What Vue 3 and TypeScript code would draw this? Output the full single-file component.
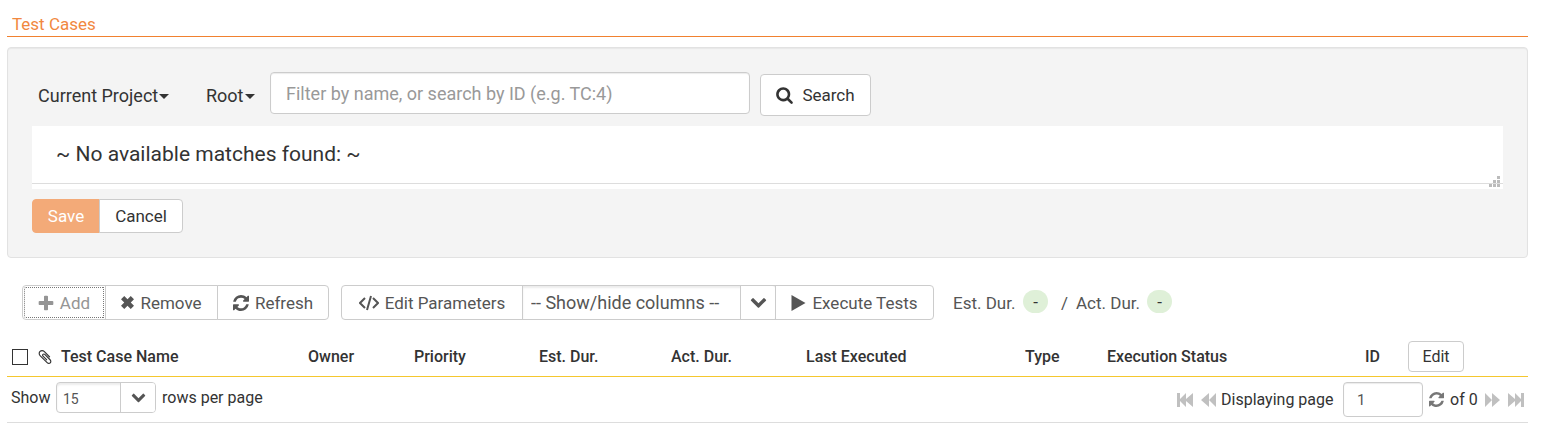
<script setup lang="ts">
import { ref } from 'vue'

const filter = ref('')
const page = ref('1')
const rows = ref('15')
const allChecked = ref(false)
const columns = ['Owner', 'Priority', 'Est. Dur.', 'Act. Dur.', 'Last Executed', 'Type', 'Execution Status', 'ID']

const chevronPath =
  'M1683 808l-742 741q-19 19-45 19t-45-19L109 808q-19-19-19-45.5t19-45.5l166-165q19-19 45-19t45 19l531 531 531-531q19-19 45-19t45 19l166 165q19 19 19 45.5t-19 45.5z'
const refreshPath =
  'M1511 1056q0 5-1 7-64 268-268 434.5T764 1664q-146 0-282.5-55T238 1452l-129 129q-19 19-45 19t-45-19-19-45v-448q0-26 19-45t45-19h448q26 0 45 19t19 45-19 45l-137 137q71 66 161 102t187 36q134 0 250-65t186-179q11-17 53-117 8-23 30-23h192q13 0 22.5 9.5t9.5 22.5zm25-800v448q0 26-19 45t-45 19h-448q-26 0-45-19t-19-45 19-45l138-138Q969 384 768 384q-134 0-250 65T332 628q-11 17-53 117-8 23-30 23H50q-13 0-22.5-9.5T18 736v-7q65-268 270-434.5T768 128q146 0 284 55.5T1297 340l130-129q19-19 45-19t45 19 19 45z'
</script>

<template>
  <main class="page">
    <h1 class="title">Test Cases</h1>

    <section class="panel">
      <form class="filters" @submit.prevent>
        <button type="button" class="picker project">Current Project<span class="caret"></span></button>
        <button type="button" class="picker root">Root<span class="caret"></span></button>
        <input v-model="filter" class="field search-field" type="text" aria-label="Filter test cases" placeholder="Filter by name, or search by ID (e.g. TC:4)" />
        <button type="submit" class="btn search">
          <svg class="icon-search" viewBox="0 0 1664 1792" aria-hidden="true"><path d="M1152 832q0-185-131.5-316.5T704 384 387.5 515.5 256 832t131.5 316.5T704 1280t316.5-131.5T1152 832zm512 832q0 52-38 90t-90 38q-54 0-90-38l-343-342q-179 124-399 124-143 0-273.5-55.5t-225-150-150-225T0 832t55.5-273.5 150-225 225-150T704 128t273.5 55.5 225 150 150 225T1408 832q0 220-124 399l343 343q37 37 37 90z" /></svg>
          Search
        </button>
      </form>

      <div class="results">
        <p class="message">~ No available matches found: ~</p>
        <svg class="grip" viewBox="0 0 11 11" aria-hidden="true"><path d="M8 0h3v3H8zM4 4h3v3H4zM8 4h3v3H8zM0 8h3v3H0zM4 8h3v3H4zM8 8h3v3H8z" /></svg>
      </div>

      <div class="group actions">
        <button type="button" class="btn save">Save</button>
        <button type="button" class="btn cancel">Cancel</button>
      </div>
    </section>

    <div class="toolbar">
      <div class="group">
        <button type="button" class="btn add">
          <svg class="icon" viewBox="0 128 1408 1536" aria-hidden="true"><path d="M1408 800v192q0 40-28 68t-68 28H896v416q0 40-28 68t-68 28H608q-40 0-68-28t-28-68v-416H96q-40 0-68-28T0 992V800q0-40 28-68t68-28h416V288q0-40 28-68t68-28h192q40 0 68 28t28 68v416h416q40 0 68 28t28 68z" /></svg>
          Add
        </button>
        <button type="button" class="btn remove">
          <svg class="icon-cross" viewBox="0 0 12 12" aria-hidden="true"><path d="M3 0l3 3 3-3 3 3-3 3 3 3-3 3-3-3-3 3-3-3 3-3-3-3z" /></svg>
          Remove
        </button>
        <button type="button" class="btn refresh">
          <svg class="icon" viewBox="0 128 1536 1536" aria-hidden="true"><path :d="refreshPath" /></svg>
          Refresh
        </button>
      </div>

      <div class="group wide">
        <button type="button" class="btn params">
          <svg class="icon-code" viewBox="0 0 20 16" aria-hidden="true"><path d="M6 3L1 8l5 5M14 3l5 5-5 5M12 1L8 15" /></svg>
          Edit Parameters
        </button>
        <span class="dropdown column-picker">
          <select aria-label="Show or hide columns">
            <option>-- Show/hide columns --</option>
          </select>
          <span class="chevron"><svg viewBox="0 448 1792 1216" aria-hidden="true"><path :d="chevronPath" /></svg></span>
        </span>
        <button type="button" class="btn execute">
          <svg class="icon-play" viewBox="0 0 14 16" aria-hidden="true"><path d="M0 0l14 8-14 8z" /></svg>
          Execute Tests
        </button>
      </div>

      <div class="durations">
        <span class="estimated">Est. Dur.</span>
        <span class="badge">-</span>
        <span class="actual">/ <span>Act. Dur.</span></span>
        <span class="badge">-</span>
      </div>
    </div>

    <table class="cases">
      <colgroup>
        <col class="c-check" /><col class="c-clip" /><col class="c-name" /><col class="c-owner" />
        <col class="c-priority" /><col class="c-est" /><col class="c-act" /><col class="c-last" />
        <col class="c-type" /><col class="c-status" /><col class="c-id" /><col class="c-edit" />
      </colgroup>
      <thead>
        <tr>
          <th><input v-model="allChecked" class="check" type="checkbox" aria-label="Select all test cases" /></th>
          <th><svg class="icon-clip" viewBox="0 128 1408 1536" role="img" aria-label="Attachments"><path d="M1404 1385q0 117-79 196t-196 79q-135 0-235-100L117 784Q4 669 4 513q0-159 110-270t269-111q158 0 273 113l605 606q10 10 10 22 0 16-30.5 46.5T1194 950q-13 0-23-10L565 333q-79-77-181-77-106 0-179 75t-73 181q0 105 76 181l776 777q63 63 145 63 64 0 106-42t42-106q0-82-63-145L633 659q-26-24-60-24-29 0-48 19t-19 48q0 32 25 59l410 410q10 10 10 22 0 16-31 47t-47 31q-12 0-22-10L441 851q-63-61-63-149 0-82 57-139t139-57q88 0 149 63l581 581q100 98 100 235z" /></svg></th>
          <th>Test Case Name</th>
          <th v-for="name in columns" :key="name">{{ name }}</th>
          <th><button type="button" class="btn edit">Edit</button></th>
        </tr>
      </thead>
      <tfoot>
        <tr>
          <td colspan="12">
            <div class="pager">
              <label class="show" for="rows">Show</label>
              <span class="dropdown row-picker">
                <select id="rows" v-model="rows">
                  <option>15</option>
                  <option>30</option>
                  <option>50</option>
                </select>
                <span class="chevron"><svg viewBox="0 448 1792 1216" aria-hidden="true"><path :d="chevronPath" /></svg></span>
              </span>
              <span>rows per page</span>
              <div class="pages">
                <button type="button" class="nav" aria-label="First page"><svg class="edge" viewBox="0 0 17 14" aria-hidden="true"><path d="M0 0h3v6l6-6v6l7-6v14L9 8v6L3 8v6H0z" /></svg></button>
                <button type="button" class="nav previous" aria-label="Previous page"><svg class="step" viewBox="0 0 15 14" aria-hidden="true"><path d="M8 0v14L0 7zM15 0v14L8 7z" /></svg></button>
                <label class="displaying" for="page">Displaying page</label>
                <input id="page" v-model="page" class="field page-field" type="text" />
                <button type="button" class="nav reload" aria-label="Reload page"><svg viewBox="0 128 1536 1536" aria-hidden="true"><path :d="refreshPath" /></svg></button>
                <span class="total">of 0</span>
                <button type="button" class="nav next" aria-label="Next page"><svg class="step" viewBox="0 0 15 14" aria-hidden="true"><path d="M0 0l7 7-7 7zM7 0l8 7-8 7z" /></svg></button>
                <button type="button" class="nav" aria-label="Last page"><svg class="edge" viewBox="0 0 17 14" aria-hidden="true"><path d="M1 0l7 6V0l6 6V0h3v14h-3V8l-6 6V8l-7 6z" /></svg></button>
              </div>
            </div>
          </td>
        </tr>
      </tfoot>
    </table>
  </main>
</template>

<style>
body {
  background: #fff;
}
</style>

<style scoped>
* {
  box-sizing: border-box;
}
.page {
  padding: 12px 13px 0 7px;
  color: #333;
  font: 400 17px/24px Roboto, "Noto Sans", sans-serif;
}
button,
input,
select {
  margin: 0;
  color: inherit;
  font: inherit;
}
svg {
  display: block;
  flex: none;
  fill: currentColor;
}
.title {
  margin: 0 0 10px;
  padding-left: 5px;
  border-bottom: 1px solid #f1812f;
  color: #f1883f;
  font-size: 17px;
  font-weight: 400;
}
.panel {
  padding: 24px;
  border: 1px solid #e2e2e2;
  border-radius: 4px;
  background: #f4f4f4;
  box-shadow: inset 0 1px 1px rgba(0, 0, 0, 0.05);
}
.filters {
  display: flex;
  align-items: flex-start;
  margin-bottom: 10px;
}
.picker {
  display: flex;
  align-items: center;
  padding: 12px 0 0;
  border: 0;
  background: none;
  font-size: 18px;
  white-space: nowrap;
}
.project {
  width: 174px;
  padding-left: 6px;
}
.root {
  width: 64px;
}
.caret {
  margin-left: 1px;
  border: 5px solid transparent;
  border-top-color: #333;
  border-bottom: 0;
}
.field {
  border: 1px solid #ccc;
  border-radius: 4px;
  background: #fff;
  box-shadow: inset 0 1px 1px rgba(0, 0, 0, 0.08);
}
.search-field {
  width: 480px;
  height: 42px;
  padding: 0 15px;
  font-size: 18px;
}
.search-field::placeholder {
  color: #999;
}
.btn {
  display: flex;
  align-items: center;
  justify-content: center;
  gap: 6px;
  padding: 0;
  border: 1px solid #ccc;
  border-radius: 4px;
  background: #fff;
  white-space: nowrap;
}
.search {
  width: 111px;
  height: 42px;
  margin: 2px 0 0 10px;
  gap: 9px;
}
.icon-search {
  width: 17px;
  height: 18px;
}
.results {
  position: relative;
  padding-bottom: 5px;
  background: #fff;
}
.message {
  margin: 0;
  padding: 16px 24px 17px;
  border-bottom: 1px solid #ddd;
  font-size: 21px;
}
.grip {
  position: absolute;
  right: 3px;
  bottom: 2px;
  width: 11px;
  height: 11px;
  fill: #bbb;
}
.group {
  display: flex;
}
.group > * + * {
  margin-left: -1px;
}
.group > :first-child {
  border-radius: 4px 0 0 4px;
}
.group > :last-child {
  border-radius: 0 4px 4px 0;
}
.actions {
  margin-top: 10px;
}
.actions .btn {
  height: 34px;
}
.save {
  width: 68px;
  border-color: #f3aa78;
  background: #f3aa78;
  color: #fff;
}
.cancel {
  width: 84px;
}
.toolbar {
  display: flex;
  align-items: center;
  gap: 12px;
  padding: 27px 0 0 15px;
  color: #555;
}
.toolbar .group {
  height: 35px;
}
.toolbar .group > :not(:first-child):not(:last-child) {
  border-radius: 0;
}
.icon {
  width: 16px;
  height: 16px;
}
.icon-cross {
  width: 13px;
  height: 13px;
}
.icon-code {
  width: 20px;
  height: 16px;
  fill: none;
  stroke: currentColor;
  stroke-width: 2;
}
.icon-play {
  width: 15px;
  height: 16px;
}
.add {
  width: 84px;
  color: #959595;
  outline: 1px dotted #777;
  outline-offset: -3px;
}
.remove {
  width: 113px;
}
.refresh {
  width: 112px;
}
.params {
  width: 182px;
}
.execute {
  width: 159px;
}
.dropdown {
  position: relative;
  display: flex;
  border: 1px solid #ccc;
  background: #fff;
}
.dropdown select {
  width: 100%;
  height: 100%;
  border: 0;
  background: transparent;
  box-shadow: inset 0 2px 2px rgba(0, 0, 0, 0.08);
  appearance: none;
}
.chevron {
  position: absolute;
  top: 0;
  right: 0;
  bottom: 0;
  display: flex;
  align-items: center;
  justify-content: center;
  width: 35px;
  border-left: 1px solid #ccc;
  border-radius: 0 3px 3px 0;
  background: #fff;
  color: #555;
  pointer-events: none;
}
.chevron svg {
  width: 17px;
  height: 12px;
}
.column-picker {
  width: 254px;
}
.column-picker select {
  padding: 0 36px 0 8px;
  font-size: 18px;
}
.durations {
  display: flex;
  align-items: center;
  margin-left: 7px;
  white-space: nowrap;
}
.estimated {
  width: 70px;
}
.actual {
  display: flex;
  gap: 8px;
  width: 86px;
  margin-left: 13px;
}
.badge {
  width: 25px;
  height: 23px;
  margin-bottom: 2px;
  border-radius: 12px;
  background: #dff0d8;
  color: #333;
  line-height: 24px;
  text-align: center;
}
.cases {
  width: 100%;
  margin-top: 16px;
  border-collapse: separate;
  border-spacing: 0;
  table-layout: fixed;
  font-size: 16px;
}
.c-check { width: 31px; }
.c-clip { width: 23px; }
.c-name { width: 247px; }
.c-owner { width: 106px; }
.c-priority { width: 125px; }
.c-est { width: 132px; }
.c-act { width: 135px; }
.c-last { width: 219px; }
.c-type { width: 82px; }
.c-status { width: 258px; }
.c-id { width: 43px; }
.c-edit { width: 120px; }
.cases th {
  height: 41px;
  padding: 1px 0 0;
  border-bottom: 1px solid #f5c72e;
  font-weight: 500;
  text-align: left;
  white-space: nowrap;
}
.cases td {
  padding: 5px 4px;
  border-bottom: 1px solid #ddd;
}
.check {
  display: block;
  width: 16px;
  height: 16px;
  margin-left: 5px;
  border: 1px solid #333;
  background: #fff;
  appearance: none;
}
.check:checked {
  background: #333;
}
.icon-clip {
  width: 14px;
  height: 14px;
}
.edit {
  width: 56px;
  height: 31px;
  font-weight: 400;
}
.pager {
  display: flex;
  align-items: flex-start;
  line-height: 32px;
  white-space: nowrap;
}
.show {
  width: 45px;
}
.row-picker {
  width: 100px;
  height: 31px;
  margin-right: 6px;
  border-radius: 4px;
}
.row-picker select {
  padding: 0 36px 0 6px;
  border-radius: 4px;
  color: #555;
  font-size: 14px;
}
.row-picker .chevron svg {
  width: 15px;
}
.pages {
  display: flex;
  align-items: center;
  margin-left: auto;
}
.nav {
  padding: 0;
  border: 0;
  background: none;
  color: #c0c0c0;
}
.edge {
  width: 17px;
  height: 14px;
}
.step {
  width: 15px;
  height: 14px;
}
.previous {
  margin: 0 5px 0 7px;
}
.displaying {
  width: 122px;
}
.page-field {
  width: 80px;
  height: 35px;
  padding: 0 13px;
  color: #555;
  font-size: 15px;
}
.reload {
  margin: 0 6px;
  color: #777;
}
.reload svg {
  width: 15px;
  height: 15px;
}
.total {
  width: 35px;
}
.next {
  margin-right: 7px;
}
</style>
